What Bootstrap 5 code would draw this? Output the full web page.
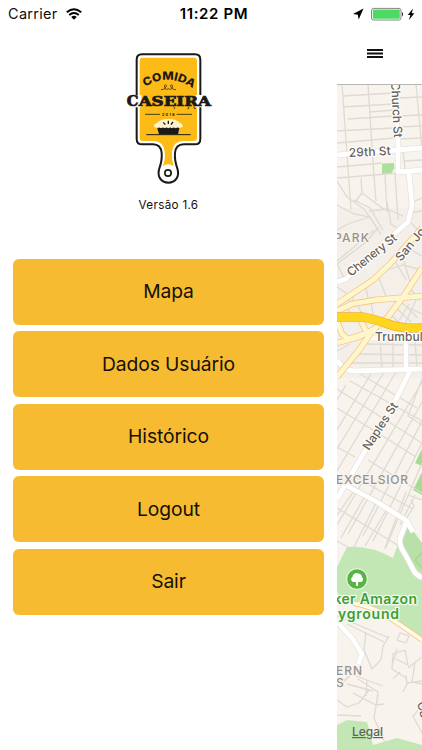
<!DOCTYPE html>
<html lang="pt-BR">

<head>
  <meta charset="utf-8" />
  <meta name="viewport" content="width=device-width, initial-scale=1.0" />
  <title>Comida Caseira</title>
  <link href="https://cdn.jsdelivr.net/npm/bootstrap@5.3.0/dist/css/bootstrap.min.css" rel="stylesheet">
  <style>
    :root {
      --caseira-yellow: #f6bb31;
    }

    body {
      font-family: Inter, "Liberation Sans", sans-serif;
      color: #111;
      background: #fff;
    }

    .app-shell {
      width: 422px;
      height: 750px;
    }

    svg {
      display: block;
      flex-shrink: 0;
    }

    .status-bar {
      height: 28px;
      padding: 0 7px 0 8px;
      font-size: 14.5px;
    }

    .status-side {
      flex: 1 1 0;
      letter-spacing: .3px;
    }

    .status-time {
      font-weight: 600;
      font-size: 15px;
      letter-spacing: .65px;
      padding-left: 5px;
      color: #000;
    }

    .side-menu {
      width: 337px;
      padding: 17px 13px 0;
    }

    .version {
      font-size: 11.7px;
      line-height: 16px;
      letter-spacing: .3px;
      margin: 7px 0 46px;
    }

    .menu-list {
      gap: 6.8px;
    }

    .menu-btn {
      --bs-btn-bg: var(--caseira-yellow);
      --bs-btn-color: #15110a;
      --bs-btn-hover-bg: #e9ad20;
      --bs-btn-border-radius: 6px;
      --bs-btn-border-width: 0;
      --bs-btn-padding-y: 0;
      --bs-btn-font-size: 19.3px;
      height: 65.7px;
      letter-spacing: -.1px;
    }

    .map-bar {
      height: 56px;
      padding: 20px 0 0 30px;
    }

    .side-map {
      width: 85px;
    }
  </style>
</head>

<body>
  <div class="app-shell d-flex flex-column overflow-hidden">
    <header class="status-bar d-flex align-items-center">
      <div class="status-side d-flex align-items-center gap-2">
        <span>Carrier</span>
        <svg width="16" height="12" viewBox="0 0 16 12" fill="none" stroke="#000" stroke-width="1.9">
          <path d="M.8 4.3Q8-2 15.2 4.3M3.2 7Q8 2.9 12.8 7" />
          <path d="M5.2 9Q8 6.6 10.8 9L8 11.8Z" fill="#000" stroke="none" />
        </svg>
      </div>
      <span class="status-time">11:22 PM</span>
      <div class="status-side d-flex align-items-center justify-content-end">
        <svg width="63" height="14" viewBox="0 0 63 14">
          <path d="M11.5 1.5 6.7 12.5 5.8 7.8 1 7Z" fill="#000" />
          <rect x="19.5" y="1.4" width="29.5" height="11.6" rx="2" fill="#fff" stroke="#777" stroke-width=".9" />
          <rect x="20.8" y="2.6" width="27" height="9.2" rx=".8" fill="#4cd964" />
          <path d="M50 5q2.2 2.2 0 4.4Z" fill="#222" />
          <path d="M61 1.5 55.8 8h2.6l-1.5 5L62.4 6.2h-2.7Z" fill="#000" />
        </svg>
      </div>
    </header>

    <div class="d-flex flex-grow-1">
      <nav class="side-menu d-flex flex-column">
        <svg class="mx-auto" width="105" height="145" viewBox="0 0 315 435">
          <path d="M78 28H237Q253 28 253 44V281Q253 298 237 298H203Q179 299 177 324Q175 345 184 370C192 395 178 413 157 413S122 395 130 370Q139 345 137 324Q135 299 111 298H78Q62 298 62 281V44Q62 28 78 28Z" fill="#fff" stroke="#1b1a17" stroke-width="6" />
          <path d="M80 38H234Q243 38 243 47V279Q243 288 234 288H202Q171 288 168 320Q166 343 173 364Q156 352 140 364Q149 343 146 320Q143 288 112 288H80Q71 288 71 279V47Q71 38 80 38Z" fill="#fdbb17" />
          <circle cx="156" cy="384" r="9.5" fill="#fff" stroke="#1b1a17" stroke-width="5" />
          <path id="title-arc" d="M88 126Q157 80 231 131" fill="none" />
          <text font-size="34" font-weight="800" fill="#1b1a17" textLength="152" lengthAdjust="spacingAndGlyphs">
            <textPath href="#title-arc">COMIDA</textPath>
          </text>
          <path d="M135 134q10 1 15-7q4-8-2-8q-6 2-1 11q5 7 10 1q5 6 11-1q5-9-1-11q-6 0-2 8q5 8 15 7" fill="none" stroke="#1b1a17" stroke-width="2" />
          <path d="M54 150H76V187H54ZM239 150H263V187H239Z" fill="#fff" />
          <g font-family="'DejaVu Serif', serif" font-weight="700" fill="#1b1a17" stroke="#1b1a17" stroke-width="2.2">
            <text x="32" y="183" font-size="42" textLength="35" lengthAdjust="spacingAndGlyphs">C</text>
            <text x="68" y="183" font-size="40" textLength="217" lengthAdjust="spacingAndGlyphs">ASEIRA</text>
          </g>
          <path d="M172 184q8 6 2 9M216 184q8 7-2 8M234 184q-3 8 6 7" fill="none" stroke="#1b1a17" stroke-width="2" />
          <path d="M87 208H132M182 208H228" stroke="#1b1a17" stroke-width="2.4" />
          <text x="138" y="212" font-size="11" font-weight="700" fill="#1b1a17" textLength="38">2016</text>
          <path d="M115 247Q111 238 123 234Q133 222 157 222Q181 222 192 234Q203 238 199 247Q157 257 115 247Z" fill="#fff3cf" />
          <path d="M142 232l6 7M157 227v10M171 231l-6 8" stroke="#1b1a17" stroke-width="4" />
          <path d="M124 250q6-5 11 0q6-5 11 0q6-5 11 0q6-5 11 0q6-5 11 0q6-5 11 0L186 268H129Z" fill="#1b1a17" />
          <path d="M91 269H224" stroke="#1b1a17" stroke-width="3" />
        </svg>
        <p class="version text-center">Versão 1.6</p>
        <div class="menu-list d-grid">
          <button type="button" class="btn menu-btn">Mapa</button>
          <button type="button" class="btn menu-btn">Dados Usuário</button>
          <button type="button" class="btn menu-btn">Histórico</button>
          <button type="button" class="btn menu-btn">Logout</button>
          <button type="button" class="btn menu-btn">Sair</button>
        </div>
      </nav>

      <main class="side-map d-flex flex-column">
        <div class="map-bar">
          <svg width="16" height="12" viewBox="0 0 16 12">
            <path d="M0 2H16M0 5.5H16M0 9H16" stroke="#111" stroke-width="2" />
          </svg>
        </div>
        <svg width="85" height="666" viewBox="337 84 85 666">
          <rect x="337" y="84" width="85" height="666" fill="#f8f4ed" />
          <path d="M337 208H422V378H337Z" fill="#f4f0e9" />
          <!-- parks -->
          <g fill="#c3e6b5">
            <path d="M382 163.5 394 163 394.5 168 391 174 382 174Z" fill="#addf9d" />
            <path d="M422 449 415 463 422 466ZM422 472 413 490 422 495Z" fill="#a5dc92" />
            <path d="M337 567 347 547Q370 545 393 558L399 541 408 523 422 543V637L400 625 380 612 356 603 337 597Z" />
            <path d="M408 526 422 543V573L411 562 402 546Z" fill="#bae0aa" />
            <path d="M337 725 347 720 367 722 373 745 397 738 422 745V750H337Z" />
          </g>
          <path d="M422 553 415 560 422 568" fill="none" stroke="#a5dc92" stroke-width="2" />
          <!-- minor streets -->
          <g fill="none" stroke="#dedad4" stroke-width="1.3">
            <path d="M342 84 351 210M368 84 374 177M416 84 422 150M343 96 393 93M343 107 393 104M369 112 394 110M348 119 393 116M337 131 393 128M337 143 394 138M397 98 422 97M398 116 422 115M398 127 422 126M398 139 422 138" />
            <path d="M337 167 382 163M337 178 399 173M337 181 347 197 364 209 376 226M361 178 362 193 355 202M362 193 385 210M374 176 376 201M385 175 387 212M395 174 398 220M404 161 422 160M403 150 405 169M399 156 400 170" />
            <path d="M337 205 354 214 370 217 381 235M354 200 370 208 383 230M369 211 387 209 403 216M387 202 391 224 397 228M337 230 350 223 370 217M337 261 354 247 374 230M344 278 337 264 366 242 379 227M410 203 422 198M409 213 422 211M409 221 422 234" />
            <path d="M387 270 403 265 422 270M394 259 406 280M401 251 411 285M408 248 422 256M378 276 386 296M352 290 354 305M365 283 369 303M346 308 360 322M357 304 365 320M371 302 374 320M388 311 400 324M393 305 411 322M399 300 418 318M337 287 346 293 351 304M409 287 420 300" />
            <path d="M409 304 398 322M416 300 405 324M407 307 422 314M365 344 422 345M356 354 422 355M350 363 422 363M380 337 382 370M393 337 393 370M415 338 417 370M337 351 350 344" />
            <path d="M372 372 337 430M384 372 337 449M396 372 337 471M337 389 384 419 422 443M350 381 422 421M357 372 417 408M346 385 337 400M422 382 337 525M422 402 348 534M422 421 363 536M422 443 373 541M422 463 385 549M413 370 391 407M337 408 365 425 416 457M337 447 355 457M422 379 408 416 422 425M368 460 422 493M355 477 413 509" />
            <path d="M406 492 385 548M415 495 400 525M365 496 341 538M354 491 337 515M337 508 399 546M337 541 348 547M376 503 354 547M387 509 365 546M411 500 414 506 406 519M408 495 422 500" />
            <path d="M347 624 384 642M337 616 389 638M366 632 364 650 372 669 381 660 383 646 389 636M400 633 397 640 406 643 409 636ZM397 649 392 666M405 650 393 654 392 669 406 678M405 650 408 665 396 659M393 679 400 672M406 675 407 684 403 692M415 662 412 682 422 684M407 683 422 681M408 668 422 657M342 682 352 674 369 681 383 686M351 675 337 688M353 693 376 705 384 704M358 679 378 692 376 707M337 700 347 707 359 703 369 690M347 684 373 691M367 681 366 696M378 695 374 718 386 745M422 706 413 716 422 733M337 715 361 716" />
          </g>
          <!-- main streets -->
          <g fill="none" stroke="#e2ded8" stroke-width="6" stroke-linejoin="round">
            <path d="M394 84 398 140 398 172 422 170M337 155 422 148M409 173 412 205 408 222 385 242 346 279 337 282M370 338H422M406 338V369M337 360Q343 370 354 371L422 369M411 369 394 403 365 451 337 499M345 485 377 502 407 521 400 538Q399 546 405 554L415 573 422 578M407 521 413 532M337 622 352 638 362 654 358 664" />
            <path d="M394 84 398 140 398 172 422 170M337 155 422 148M409 173 412 205 408 222 385 242 346 279 337 282M370 338H422M406 338V369M337 360Q343 370 354 371L422 369M411 369 394 403 365 451 337 499M345 485 377 502 407 521 400 538Q399 546 405 554L415 573 422 578M407 521 413 532M337 622 352 638 362 654 358 664" stroke="#fff" stroke-width="4.8" />
          </g>
          <!-- avenues and the highway -->
          <g fill="none" stroke="#f6c78a" stroke-width="6.4" stroke-linejoin="round">
            <path d="M422 228 405 247 390 264 373 280 337 304M337 311 352 304 375 300 422 296M422 268 403 297 388 317 373 330 359 350 337 377M337 321 342 334 348 339 367 333 361 321M337 343 359 337 374 329" />
            <path d="M422 228 405 247 390 264 373 280 337 304M337 311 352 304 375 300 422 296M422 268 403 297 388 317 373 330 359 350 337 377M337 321 342 334 348 339 367 333 361 321M337 343 359 337 374 329" stroke="#fff7cc" stroke-width="4.8" />
          </g>
          <path d="M353 603Q368 606 380 612 400 624 422 640" fill="none" stroke="#f3c98f" stroke-width="5.4" />
          <path d="M353 603Q368 606 380 612 400 624 422 640" fill="none" stroke="#fffbe5" stroke-width="3.6" />
          <path d="M337 317H363Q374 319 388 324T422 328" fill="none" stroke="#f1ae35" stroke-width="9.4" />
          <path d="M337 317H363Q374 319 388 324T422 328" fill="none" stroke="#ffd61f" stroke-width="8" />
          <!-- labels -->
          <g font-size="12" font-weight="500" fill="#66625d" stroke="#fffdf9" stroke-width="2.4" paint-order="stroke" stroke-linejoin="round">
            <text transform="translate(391 82) rotate(87)" textLength="56">Church St</text>
            <text transform="translate(349 157) rotate(-3)" textLength="42">29th St</text>
            <text transform="translate(351 277) rotate(-39)" textLength="60">Chenery St</text>
            <text transform="translate(401 262) rotate(-50)">San Jose</text>
            <text x="375" y="341" textLength="66">Trumbull St</text>
            <text transform="translate(369 451) rotate(-57)" textLength="54">Naples St</text>
            <text transform="translate(417 703) rotate(75)">Ca</text>
            <g fill="#96928c" stroke="#f8f4ed">
              <text x="334" y="242" textLength="35">PARK</text>
              <text x="336" y="484" textLength="72">EXCELSIOR</text>
              <text x="336" y="675" textLength="26">ERN</text>
              <text x="336" y="687">S</text>
            </g>
          </g>
          <circle cx="357" cy="579" r="10.4" fill="#58b545" stroke="#e1f2d9" stroke-width="1.2" />
          <path d="M356.2 586 356 582H352.8A3 3 0 0 1 352.5 576.8 4 4 0 0 1 358 573.4 3.7 3.7 0 0 1 362 577.2 2.7 2.7 0 0 1 361 582H358L357.8 586Z" fill="#fff" />
          <g font-size="14" font-weight="600" fill="#3f9f32" stroke="#f3faef" stroke-width="2.6" paint-order="stroke" stroke-linejoin="round">
            <text x="417" y="604" text-anchor="end" textLength="92">cker Amazon</text>
            <text x="399" y="619" text-anchor="end" textLength="61">yground</text>
          </g>
          <text x="352" y="736" font-size="12" font-weight="500" fill="#5c6657" text-decoration="underline" textLength="31">Legal</text>
          <path d="M337 84.5H422" stroke="#b9b6b1" />
        </svg>
      </main>
    </div>
  </div>

  <script src="https://cdn.jsdelivr.net/npm/bootstrap@5.3.0/dist/js/bootstrap.bundle.min.js"></script>
</body>

</html>
